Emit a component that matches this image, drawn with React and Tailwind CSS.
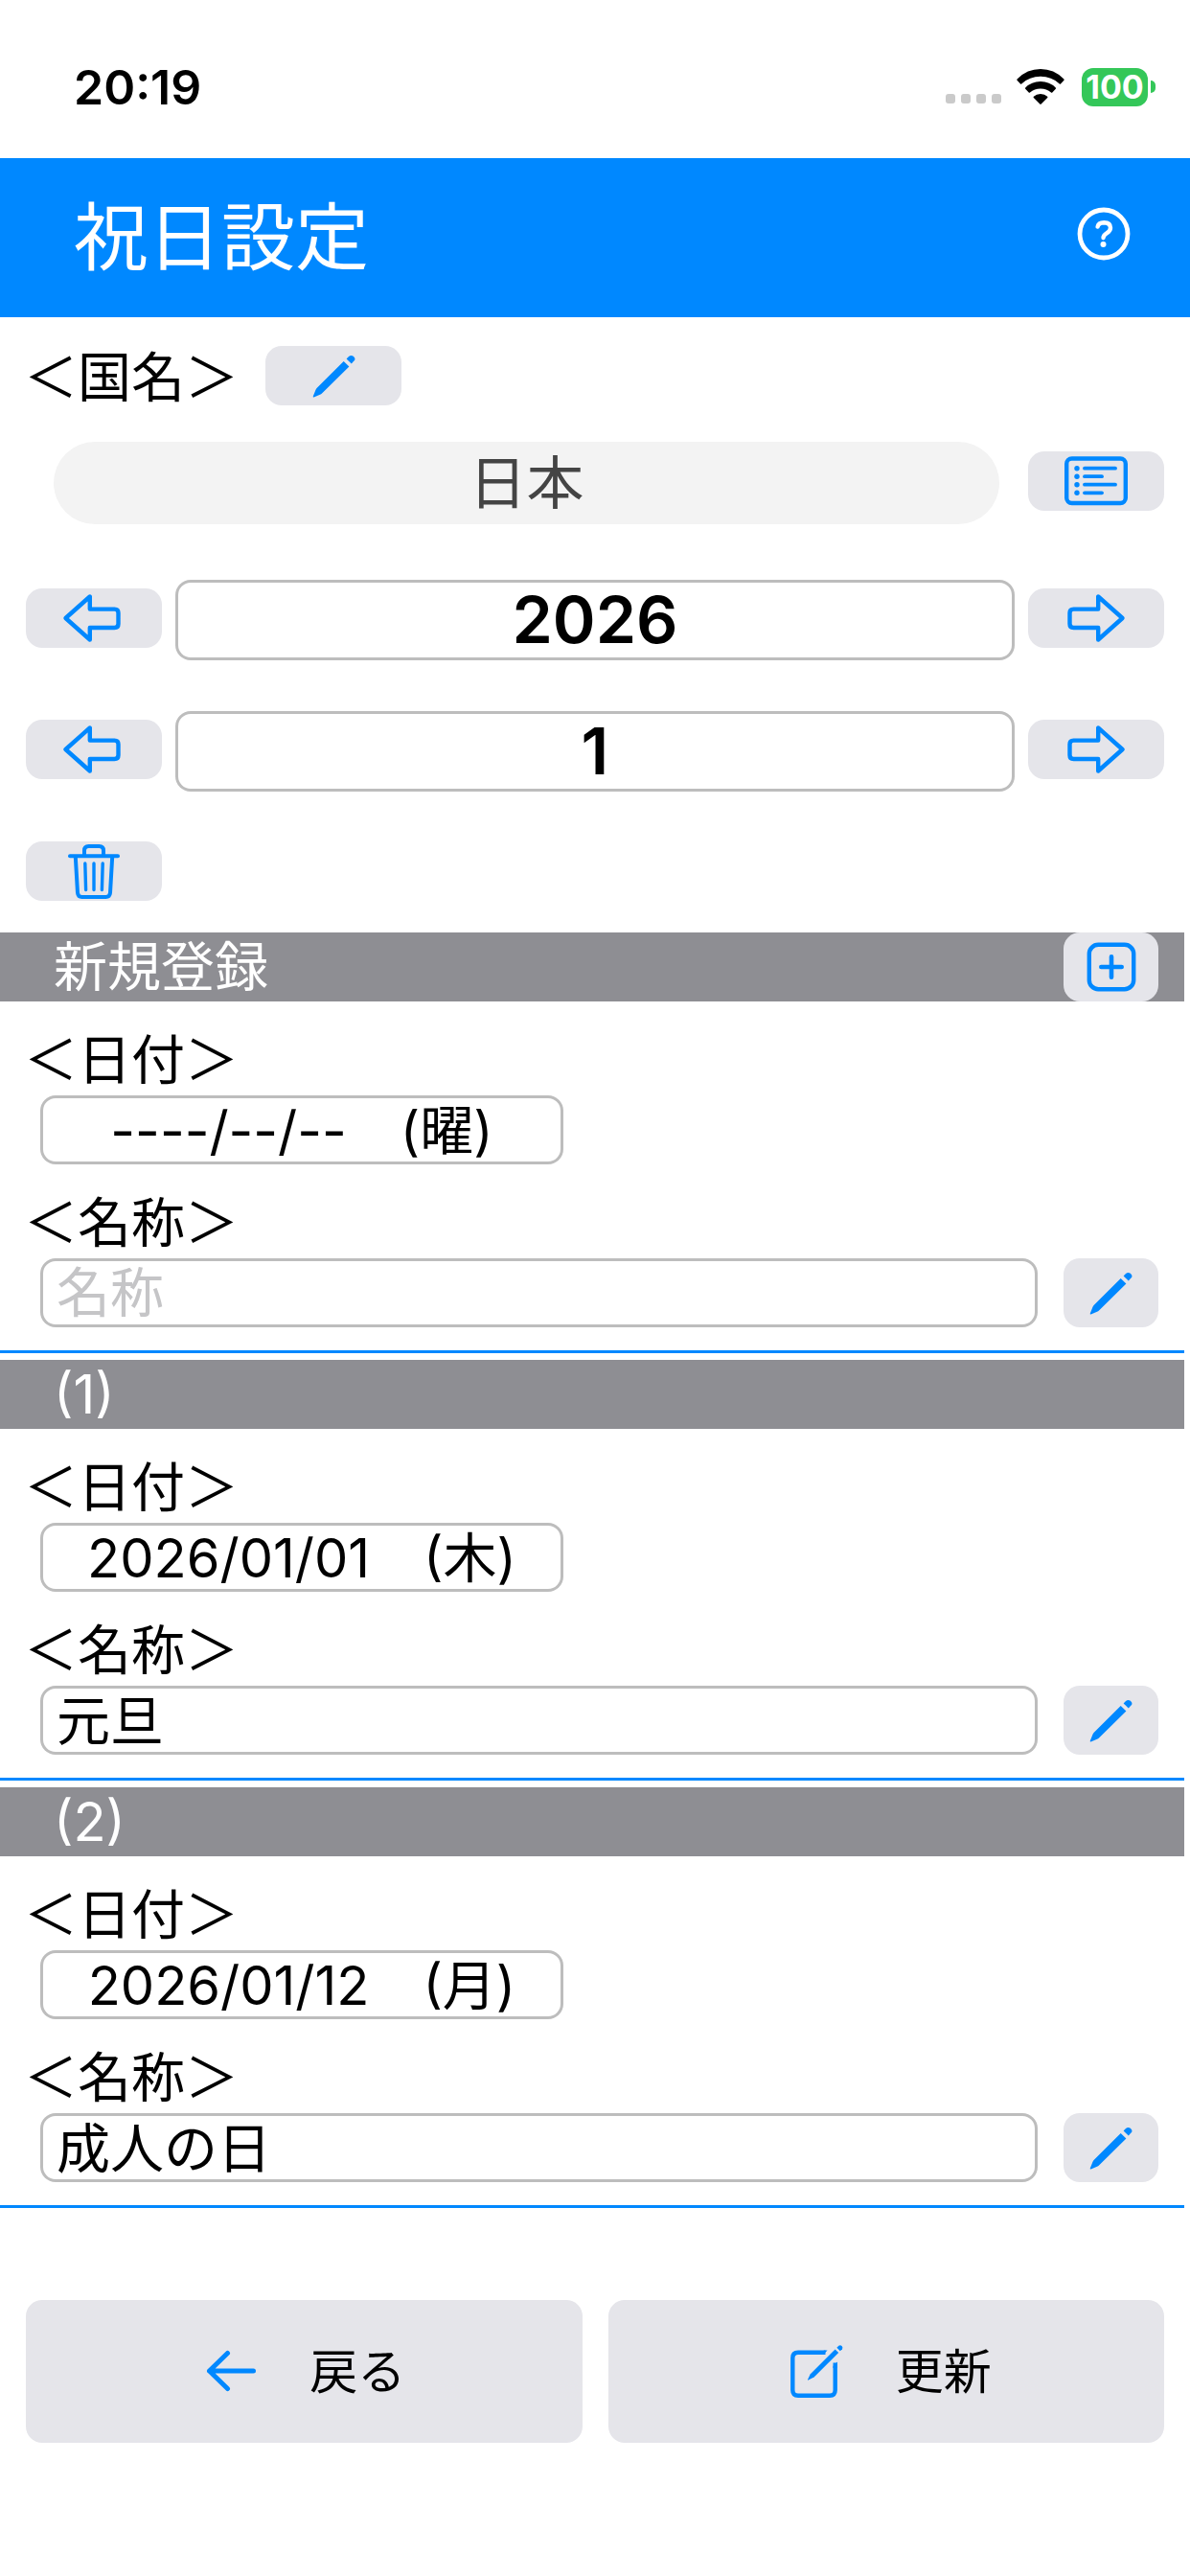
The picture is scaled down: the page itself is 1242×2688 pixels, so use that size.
import React from "react";

const stroke = {
  fill: "none",
  stroke: "currentColor",
  strokeLinecap: "round",
  strokeLinejoin: "round",
};

function PencilIcon() {
  return (
    <svg viewBox="0 0 45 45" className="h-[45px] w-[45px]" fill="currentColor" aria-hidden="true">
      <path d="M32.7 7 L38.4 12.4 L10 40.6 Q9.2 41.4 8 41.8 L1.6 44.4 Q.4 44.6 .8 43.4 L3.4 37 Q3.8 35.8 4.6 35 Z" />
      <path d="M35.6 4.4 L38 2 Q40.2 .2 42.4 1.4 Q45.2 3.4 44.2 5.8 L40.8 9.6 Z" />
    </svg>
  );
}

function BlockArrowIcon({ flip }) {
  return (
    <svg viewBox="0 0 60 50" className="h-[50px] w-[60px] overflow-visible" aria-hidden="true">
      <path
        {...stroke}
        strokeWidth="4.4"
        transform={flip ? "matrix(-1 0 0 1 60 0)" : "translate(-2 0)"}
        d="M2.5 25 L27.8 2.5 V15.6 H53.5 Q57.5 15.6 57.5 19.6 V31 Q57.5 35 53.5 35 H27.8 V47.5 Z"
      />
    </svg>
  );
}

function TrashIcon() {
  return (
    <svg viewBox="0 0 54 57" className="h-[57px] w-[54px]" aria-hidden="true">
      <g {...stroke} strokeWidth="4">
        <path d="M2 12.3 H52" />
        <path d="M17 12 V6.5 Q17 2 21.5 2 H32.5 Q37 2 37 6.5 V12" />
        <path d="M7.8 13 L10 50.6 Q10.4 55 14.6 55 H39.4 Q43.6 55 44 50.6 L46.2 13" />
      </g>
      <path {...stroke} strokeWidth="3.4" d="M17.8 20 L18.6 47.5 M27 20 V47.5 M36.2 20 L35.4 47.5" />
    </svg>
  );
}

function ListIcon() {
  const rows = [
    [12.7, 53],
    [21.2, 39],
    [29.7, 53],
    [38.3, 39],
  ];
  return (
    <svg viewBox="0 0 66 52" className="h-[52px] w-[66px]" aria-hidden="true">
      <rect {...stroke} strokeWidth="4.4" x="2.2" y="2.5" width="61.6" height="46.5" rx="5.5" />
      {rows.map(([y, end]) => (
        <g key={y}>
          <circle cx="13" cy={y} r="2.7" fill="currentColor" />
          <path {...stroke} strokeWidth="3.8" d={`M21 ${y} H${end}`} />
        </g>
      ))}
    </svg>
  );
}

function PlusSquareIcon() {
  return (
    <svg viewBox="0 0 52 52" className="h-[52px] w-[52px]" aria-hidden="true">
      <rect {...stroke} strokeWidth="4.4" x="2.8" y="2.8" width="46.4" height="46.4" rx="9.5" />
      <path {...stroke} strokeWidth="4.6" d="M15.3 26 H36.7 M26 15.3 V36.7" />
    </svg>
  );
}

function HelpIcon() {
  return (
    <svg viewBox="0 0 56 56" className="h-14 w-14" aria-hidden="true">
      <circle {...stroke} strokeWidth="4.8" cx="28" cy="28" r="25" />
      <path {...stroke} strokeWidth="4.4" d="M21.6 20.6 Q22.4 16.2 28.2 16.2 Q35 16.4 35 21.8 Q35 25 31 27.4 Q27.6 29.4 27.5 32.2" />
      <circle cx="27.5" cy="39" r="3" fill="currentColor" />
    </svg>
  );
}

function BackArrowIcon() {
  return (
    <svg viewBox="0 0 56 56" className="h-14 w-14" aria-hidden="true">
      <path {...stroke} strokeWidth="5" d="M7.5 27 H53.5 M26.5 8.5 L7.5 27 L26.5 45.5" />
    </svg>
  );
}

function ComposeIcon() {
  return (
    <svg viewBox="0 0 64 56" className="h-14 w-16 overflow-visible" aria-hidden="true">
      <path
        fill="none"
        stroke="currentColor"
        strokeWidth="4.4"
        d="M46.5 7.7 H18 Q12.3 7.7 12.3 13.4 V47 Q12.3 52.7 18 52.7 H51 Q56.7 52.7 56.7 47 V18.5"
      />
      <path fill="currentColor" d="M45 5.5 H48.6 L44.2 9.9 H42 Z M54.5 22 L58.9 17.6 V24 H54.5 Z" />
      <path fill="currentColor" d="M56.6 4.6 L60.2 8 L34.6 33.6 L28.6 36.6 Q27.8 36.8 28 36 L30.8 30.2 Z" />
      <path fill="currentColor" d="M58.4 2.8 L60.4 .8 Q62 -.2 63.6 1 Q65 2.6 64 4.2 L61.9 6.3 Z" />
    </svg>
  );
}

function WifiIcon() {
  return (
    <svg viewBox="0 0 50 37" className="h-[37px] w-[50px]" fill="currentColor" aria-hidden="true">
      <path d="M.6 10.4 Q11 0 25 0 Q39 0 49.4 10.4 Q50 11 49.5 11.7 L46 15.4 Q45.4 16 44.8 15.4 Q36.4 7.8 25 7.8 Q13.6 7.8 5.2 15.4 Q4.6 16 4 15.4 L.5 11.7 Q0 11 .6 10.4 Z" />
      <path d="M9.2 19.5 Q15.5 13 25 13 Q34.5 13 40.8 19.5 Q41.3 20.2 40.8 20.8 L37.3 24.5 Q36.6 25 36 24.5 Q31.4 20.6 25 20.6 Q18.6 20.6 14 24.5 Q13.4 25 12.7 24.5 L9.2 20.8 Q8.7 20.2 9.2 19.5 Z" />
      <path d="M17.8 28.8 Q20.6 26 25 26 Q29.4 26 32.2 28.8 Q32.7 29.4 32.2 30 L25.7 36.6 Q25 37.2 24.3 36.6 L17.8 30 Q17.3 29.4 17.8 28.8 Z" />
    </svg>
  );
}

function StatusBar() {
  return (
    <div className="flex h-[165px] items-center justify-between pt-4 pr-9 pl-[77px]">
      <time className="text-[50px] leading-none font-semibold">20:19</time>
      <div className="flex items-center">
        <div className="mt-[25px] mr-4 flex gap-[6px]">
          {[0, 1, 2, 3].map((i) => (
            <span key={i} className="h-[10px] w-[10px] rounded-[3px] bg-[#cacaca]" />
          ))}
        </div>
        <WifiIcon />
        <div className="ml-[18px] flex h-10 w-[69px] items-center justify-center rounded-[12px] bg-[#34c759] text-[34px] leading-none font-bold text-white">
          100
        </div>
        <span className="ml-[3px] h-[13px] w-[5px] rounded-r-full bg-[#34c759]" />
      </div>
    </div>
  );
}

function GrayButton({ label, children }) {
  return (
    <button
      type="button"
      aria-label={label}
      className="mb-1 flex h-[62px] w-[142px] shrink-0 items-center justify-center rounded-[17px] bg-[#e5e5ea] text-[#0088ff]"
    >
      {children}
    </button>
  );
}

function CellButton({ label, children }) {
  return (
    <button
      type="button"
      aria-label={label}
      className="mr-[27px] flex h-[72px] w-[99px] shrink-0 items-center justify-center rounded-[17px] bg-[#e5e5ea] text-[#0088ff]"
    >
      {children}
    </button>
  );
}

function Stepper({ label, value }) {
  return (
    <div className="flex items-center gap-[14px] px-[27px]">
      <GrayButton label={`${label} -`}>
        <BlockArrowIcon />
      </GrayButton>
      <input
        type="text"
        aria-label={label}
        defaultValue={value}
        className="h-[84px] min-w-0 flex-1 rounded-[16px] bg-white pb-[2px] text-center text-[68px] leading-none font-semibold ring-[3px] ring-[#bdbdbd] ring-inset"
      />
      <GrayButton label={`${label} +`}>
        <BlockArrowIcon flip />
      </GrayButton>
    </div>
  );
}

function FieldLabel({ htmlFor, children }) {
  return (
    <label htmlFor={htmlFor} className="block pt-[25px] pl-[25px] text-[56px] leading-[73px]">
      {children}
    </label>
  );
}

function HolidaySection({ id, title, date, name, action }) {
  return (
    <section className="mb-[7px] border-b-[3px] border-[#0088ff] pb-6">
      <div className="flex h-[72px] items-center justify-between bg-[#8e8e93] pl-14 text-white">
        <h2 className="text-[56px] leading-[72px]">{title}</h2>
        {action}
      </div>
      <FieldLabel htmlFor={`${id}-date`}>＜日付＞</FieldLabel>
      <input
        id={`${id}-date`}
        type="text"
        defaultValue={date}
        className="ml-[42px] block h-[72px] w-[546px] rounded-[16px] bg-white pb-2 text-center text-[56px] leading-none ring-[3px] ring-[#bdbdbd] ring-inset"
      />
      <FieldLabel htmlFor={`${id}-name`}>＜名称＞</FieldLabel>
      <div className="flex gap-[27px] pl-[42px]">
        <input
          id={`${id}-name`}
          type="text"
          defaultValue={name}
          placeholder="名称"
          className="h-[72px] min-w-0 flex-1 rounded-[16px] bg-white pl-[17px] text-[56px] leading-none ring-[3px] ring-[#bdbdbd] ring-inset not-placeholder-shown:pb-2 placeholder:text-[#c5c5c7]"
        />
        <CellButton label="編集">
          <PencilIcon />
        </CellButton>
      </div>
    </section>
  );
}

function FooterButton({ icon, children }) {
  return (
    <button
      type="button"
      className="flex h-[149px] flex-1 items-center justify-center gap-14 rounded-[17px] bg-[#e5e5ea] text-[50px] leading-none"
    >
      <span className="text-[#0088ff]">{icon}</span>
      {children}
    </button>
  );
}

export default function App() {
  return (
    <div
      lang="ja"
      className="min-h-screen bg-white font-['Inter','Noto_Sans_CJK_JP',sans-serif] text-black"
    >
      <StatusBar />
      <header className="flex h-[166px] items-center justify-between bg-[#0088ff] pr-[62px] pl-[77px] text-white">
        <h1 className="text-[77px] leading-none">祝日設定</h1>
        <button type="button" aria-label="ヘルプ" className="mb-2">
          <HelpIcon />
        </button>
      </header>

      <main>
        <div className="flex items-center gap-7 pt-[30px] pl-[25px]">
          <span className="text-[56px] leading-[62px]">＜国名＞</span>
          <GrayButton label="国名を編集">
            <PencilIcon />
          </GrayButton>
        </div>
        <div className="mt-[34px] flex items-center gap-[30px] pr-[27px] pl-14">
          <button
            type="button"
            className="h-[86px] flex-1 rounded-full bg-[#f3f3f3] text-[60px] leading-none text-[#444444]"
          >
            日本
          </button>
          <GrayButton label="国名一覧">
            <ListIcon />
          </GrayButton>
        </div>
        <div className="mt-[58px] flex flex-col gap-[53px]">
          <Stepper label="年" value="2026" />
          <Stepper label="月" value="1" />
        </div>
        <div className="flex pt-[52px] pb-[29px] pl-[27px]">
          <GrayButton label="削除">
            <TrashIcon />
          </GrayButton>
        </div>

        <div className="mr-[6px]">
          <HolidaySection
            id="new"
            title="新規登録"
            date="----/--/--　(曜)"
            name=""
            action={
              <CellButton label="追加">
                <PlusSquareIcon />
              </CellButton>
            }
          />
          <HolidaySection id="h1" title="(1)" date="2026/01/01　(木)" name="元旦" />
          <HolidaySection id="h2" title="(2)" date="2026/01/12　(月)" name="成人の日" />
        </div>
      </main>

      <footer className="mt-24 flex gap-[27px] px-[27px]">
        <FooterButton icon={<BackArrowIcon />}>戻る</FooterButton>
        <FooterButton icon={<ComposeIcon />}>更新</FooterButton>
      </footer>
    </div>
  );
}
